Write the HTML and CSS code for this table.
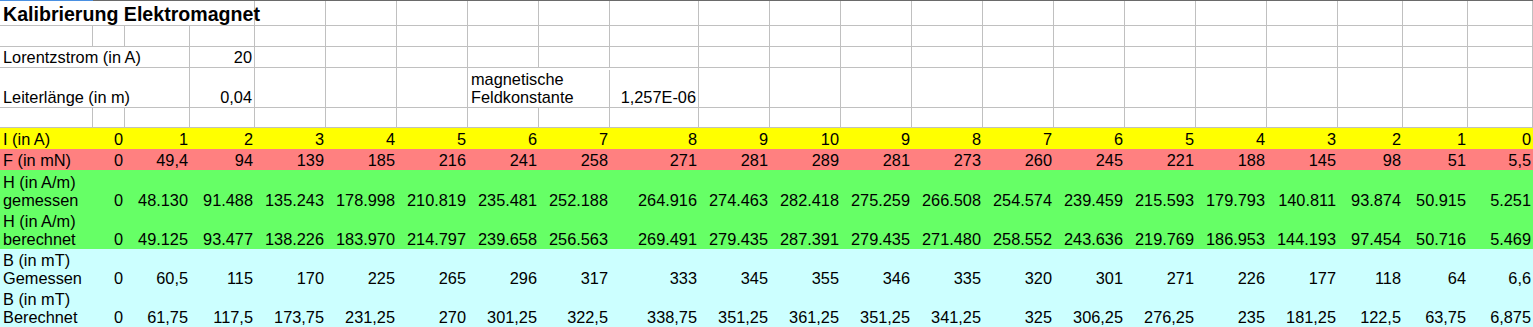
FILE: index.html
```html
<!DOCTYPE html>
<html lang="de">
<head>
<meta charset="utf-8">
<title>Kalibrierung Elektromagnet</title>
<link rel="stylesheet" href="styles.css">
</head>
<body>
<div class="sheet">
  <div class="row topline"><div class="sel"></div><div class="rest"></div></div>

  <div class="row h25">
    <div class="c title span4">Kalibrierung Elektromagnet</div>
    <div class="c"></div><div class="c"></div><div class="c"></div><div class="c"></div><div class="c"></div><div class="c"></div>
    <div class="c"></div><div class="c"></div><div class="c"></div><div class="c"></div><div class="c"></div><div class="c"></div>
    <div class="c"></div><div class="c"></div><div class="c"></div><div class="c"></div><div class="c"></div><div class="c"></div>
  </div>

  <div class="row h21">
    <div class="c"></div><div class="c"></div><div class="c"></div><div class="c"></div><div class="c"></div><div class="c"></div>
    <div class="c"></div><div class="c"></div><div class="c"></div><div class="c"></div><div class="c"></div><div class="c"></div>
    <div class="c"></div><div class="c"></div><div class="c"></div><div class="c"></div><div class="c"></div><div class="c"></div>
    <div class="c"></div><div class="c"></div><div class="c"></div><div class="c"></div>
  </div>

  <div class="row h21">
    <div class="c span3">Lorentzstrom (in A)</div>
    <div class="c r">20</div>
    <div class="c"></div><div class="c"></div><div class="c"></div><div class="c"></div><div class="c"></div><div class="c"></div>
    <div class="c"></div><div class="c"></div><div class="c"></div><div class="c"></div><div class="c"></div><div class="c"></div>
    <div class="c"></div><div class="c"></div><div class="c"></div><div class="c"></div><div class="c"></div><div class="c"></div>
  </div>

  <div class="row h40">
    <div class="c span3">Leiterlänge (in m)</div>
    <div class="c r">0,04</div>
    <div class="c"></div><div class="c"></div><div class="c"></div>
    <div class="c span2 wrap">magnetische<br>Feldkonstante</div>
    <div class="c r">1,257E-06</div>
    <div class="c"></div><div class="c"></div><div class="c"></div><div class="c"></div><div class="c"></div><div class="c"></div>
    <div class="c"></div><div class="c"></div><div class="c"></div><div class="c"></div><div class="c"></div><div class="c"></div>
  </div>

  <div class="row h20">
    <div class="c"></div><div class="c"></div><div class="c"></div><div class="c"></div><div class="c"></div><div class="c"></div>
    <div class="c"></div><div class="c"></div><div class="c"></div><div class="c"></div><div class="c"></div><div class="c"></div>
    <div class="c"></div><div class="c"></div><div class="c"></div><div class="c"></div><div class="c"></div><div class="c"></div>
    <div class="c"></div><div class="c"></div><div class="c"></div><div class="c"></div>
  </div>

  <div class="row band yellow h21b">
    <div class="c">I (in A)</div>
    <div class="c r">0</div><div class="c r">1</div><div class="c r">2</div><div class="c r">3</div><div class="c r">4</div>
    <div class="c r">5</div><div class="c r">6</div><div class="c r">7</div><div class="c r">8</div><div class="c r">9</div>
    <div class="c r">10</div><div class="c r">9</div><div class="c r">8</div><div class="c r">7</div><div class="c r">6</div>
    <div class="c r">5</div><div class="c r">4</div><div class="c r">3</div><div class="c r">2</div><div class="c r">1</div>
    <div class="c r">0</div>
  </div>

  <div class="row band red h21b">
    <div class="c">F (in mN)</div>
    <div class="c r">0</div><div class="c r">49,4</div><div class="c r">94</div><div class="c r">139</div><div class="c r">185</div>
    <div class="c r">216</div><div class="c r">241</div><div class="c r">258</div><div class="c r">271</div><div class="c r">281</div>
    <div class="c r">289</div><div class="c r">281</div><div class="c r">273</div><div class="c r">260</div><div class="c r">245</div>
    <div class="c r">221</div><div class="c r">188</div><div class="c r">145</div><div class="c r">98</div><div class="c r">51</div>
    <div class="c r">5,5</div>
  </div>

  <div class="row band green h40b">
    <div class="c">H (in A/m)<br>gemessen</div>
    <div class="c r">0</div><div class="c r">48.130</div><div class="c r">91.488</div><div class="c r">135.243</div><div class="c r">178.998</div>
    <div class="c r">210.819</div><div class="c r">235.481</div><div class="c r">252.188</div><div class="c r">264.916</div><div class="c r">274.463</div>
    <div class="c r">282.418</div><div class="c r">275.259</div><div class="c r">266.508</div><div class="c r">254.574</div><div class="c r">239.459</div>
    <div class="c r">215.593</div><div class="c r">179.793</div><div class="c r">140.811</div><div class="c r">93.874</div><div class="c r">50.915</div>
    <div class="c r">5.251</div>
  </div>

  <div class="row band green h39b">
    <div class="c">H (in A/m)<br>berechnet</div>
    <div class="c r">0</div><div class="c r">49.125</div><div class="c r">93.477</div><div class="c r">138.226</div><div class="c r">183.970</div>
    <div class="c r">214.797</div><div class="c r">239.658</div><div class="c r">256.563</div><div class="c r">269.491</div><div class="c r">279.435</div>
    <div class="c r">287.391</div><div class="c r">279.435</div><div class="c r">271.480</div><div class="c r">258.552</div><div class="c r">243.636</div>
    <div class="c r">219.769</div><div class="c r">186.953</div><div class="c r">144.193</div><div class="c r">97.454</div><div class="c r">50.716</div>
    <div class="c r">5.469</div>
  </div>

  <div class="row band cyan h39b">
    <div class="c">B (in mT)<br>Gemessen</div>
    <div class="c r">0</div><div class="c r">60,5</div><div class="c r">115</div><div class="c r">170</div><div class="c r">225</div>
    <div class="c r">265</div><div class="c r">296</div><div class="c r">317</div><div class="c r">333</div><div class="c r">345</div>
    <div class="c r">355</div><div class="c r">346</div><div class="c r">335</div><div class="c r">320</div><div class="c r">301</div>
    <div class="c r">271</div><div class="c r">226</div><div class="c r">177</div><div class="c r">118</div><div class="c r">64</div>
    <div class="c r">6,6</div>
  </div>

  <div class="row band cyan h39b">
    <div class="c">B (in mT)<br>Berechnet</div>
    <div class="c r">0</div><div class="c r">61,75</div><div class="c r">117,5</div><div class="c r">173,75</div><div class="c r">231,25</div>
    <div class="c r">270</div><div class="c r">301,25</div><div class="c r">322,5</div><div class="c r">338,75</div><div class="c r">351,25</div>
    <div class="c r">361,25</div><div class="c r">351,25</div><div class="c r">341,25</div><div class="c r">325</div><div class="c r">306,25</div>
    <div class="c r">276,25</div><div class="c r">235</div><div class="c r">181,25</div><div class="c r">122,5</div><div class="c r">63,75</div>
    <div class="c r">6,875</div>
  </div>
</div>
</body>
</html>
```

FILE: styles.css
```css
html, body {
  margin: 0;
  padding: 0;
  background: #ffffff;
}

body {
  font-family: "Liberation Sans", Arial, sans-serif;
  font-size: 16.33px;
  color: #000000;
}

.sheet {
  width: 1533px;
  overflow: hidden;
}

.row {
  display: grid;
  grid-template-columns: 93px 32px 65px 65px repeat(5, 71px) 89px repeat(9, 71px) repeat(3, 65px);
}

.topline {
  height: 1px;
  grid-template-columns: 93px 1fr;
}

.topline .sel {
  background: #4a90e2;
}

.topline .rest {
  background: #6a6a6a;
}

.h25 { height: 25px; }
.h21 { height: 21px; }
.h20 { height: 20px; }
.h40 { height: 40px; }
.h21b { height: 21px; }
.h40b { height: 40px; }
.h39b { height: 39px; }

.c {
  box-sizing: border-box;
  border-right: 1px solid #c0c0c0;
  border-bottom: 1px solid #c0c0c0;
  display: flex;
  align-items: flex-end;
  padding: 0 2px 0 3px;
  white-space: nowrap;
  line-height: 18.7px;
  min-width: 0;
}

.r {
  justify-content: flex-end;
  padding: 0 2px 0 2px;
}

.wrap {
  display: block;
  align-self: end;
}

.span2 { grid-column: span 2; }
.span3 { grid-column: span 3; }
.span4 { grid-column: span 4; }

.title {
  font-weight: bold;
  font-size: 19.6px;
  line-height: 22px;
}

.band .c {
  border: none;
}

.yellow { background: #ffff00; }
.red { background: #ff8080; }
.green { background: #66ff66; }
.cyan { background: #ccffff; }
```
